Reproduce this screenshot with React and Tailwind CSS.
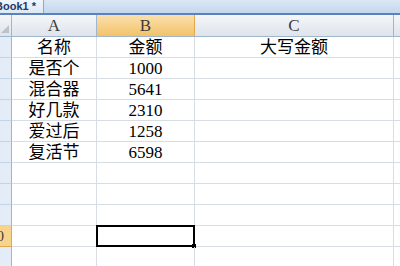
const rows = [
  ["名称", "金额", "大写金额"],
  ["是否个", "1000", ""],
  ["混合器", "5641", ""],
  ["好几款", "2310", ""],
  ["爱过后", "1258", ""],
  ["复活节", "6598", ""],
  ["", "", ""],
  ["", "", ""],
  ["", "", ""],
  ["", "", ""],
  ["", "", ""],
];

const cellFont = {
  fontFamily: '"Liberation Serif", "Noto Sans CJK SC", serif',
};

function App() {
  return (
    <div className="w-[400px] h-[266px] overflow-hidden bg-white" style={cellFont}>
      {/* workbook tab strip */}
      <div className="flex h-[13px] bg-gradient-to-b from-[#dbe7f5] to-[#c3d7ef]">
        <div className="w-[44px] h-full overflow-hidden flex items-center bg-gradient-to-b from-[#f1f6fc] to-[#dde8f5] border-r border-[#8ba9d3]">
          <span
            className="-ml-[5px] whitespace-nowrap text-[11px] font-bold leading-none text-[#1d3a66]"
            style={{ fontFamily: '"Liberation Sans", sans-serif' }}
          >
            Book1 *
          </span>
        </div>
      </div>
      <div className="h-[2px] bg-[#5b82bd]" />

      {/* column headers */}
      <div className="flex h-[22px] border-b border-[#9eb6ce] text-[17px] text-[#3c3c3c]">
        <div className="relative w-[12px] shrink-0 border-r border-[#9eb6ce] bg-gradient-to-b from-[#f4f6f9] to-[#dfe4eb]">
          <svg className="absolute right-[2px] bottom-[3px]" width="8" height="8" viewBox="0 0 8 8">
            <polygon points="8,0 8,8 0,8" fill="#b9c3cf" />
          </svg>
        </div>
        <div className="w-[85px] shrink-0 border-r border-[#9eb6ce] bg-gradient-to-b from-[#f4f6f9] to-[#dfe4eb] flex items-center justify-center">
          A
        </div>
        <div className="w-[98px] shrink-0 border-r border-[#e3a84c] bg-gradient-to-b from-[#fae0ad] to-[#f3c267] flex items-center justify-center">
          B
        </div>
        <div className="w-[199px] shrink-0 border-r border-[#9eb6ce] bg-gradient-to-b from-[#f4f6f9] to-[#dfe4eb] flex items-center justify-center">
          C
        </div>
        <div className="flex-1 bg-gradient-to-b from-[#f4f6f9] to-[#dfe4eb]" />
      </div>

      {/* grid rows */}
      {rows.map((r, i) => {
        const selected = i === 9;
        return (
          <div key={i} className="flex h-[21px] text-[17px] leading-none text-black">
            <div
              className={
                selected
                  ? "w-[12px] shrink-0 border-r border-b border-[#e3a84c] bg-[#f8d38c] overflow-hidden flex items-center justify-end pr-[7px] text-[15px] text-[#3c3c3c]"
                  : "w-[12px] shrink-0 border-r border-b border-[#9eb6ce] border-b-[#c5d3e6] bg-[#e4ecf7]"
              }
            >
              {selected ? <span className="whitespace-nowrap">10</span> : null}
            </div>
            <div className="w-[85px] shrink-0 border-r border-b border-[#d8dce3] flex items-center justify-center">
              {r[0]}
            </div>
            <div className="relative w-[98px] shrink-0 border-r border-b border-[#d8dce3] flex items-center justify-center">
              {r[1]}
              {selected ? (
                <div className="absolute -left-[1px] -top-[1px] -right-[1px] -bottom-[1px] border-2 border-black">
                  <div className="absolute -right-[3px] -bottom-[3px] w-[4px] h-[4px] bg-black" />
                </div>
              ) : null}
            </div>
            <div className="w-[199px] shrink-0 border-r border-b border-[#d8dce3] flex items-center justify-center">
              {r[2]}
            </div>
            <div className="flex-1 border-b border-[#d8dce3]" />
          </div>
        );
      })}
    </div>
  );
}

export default App;
